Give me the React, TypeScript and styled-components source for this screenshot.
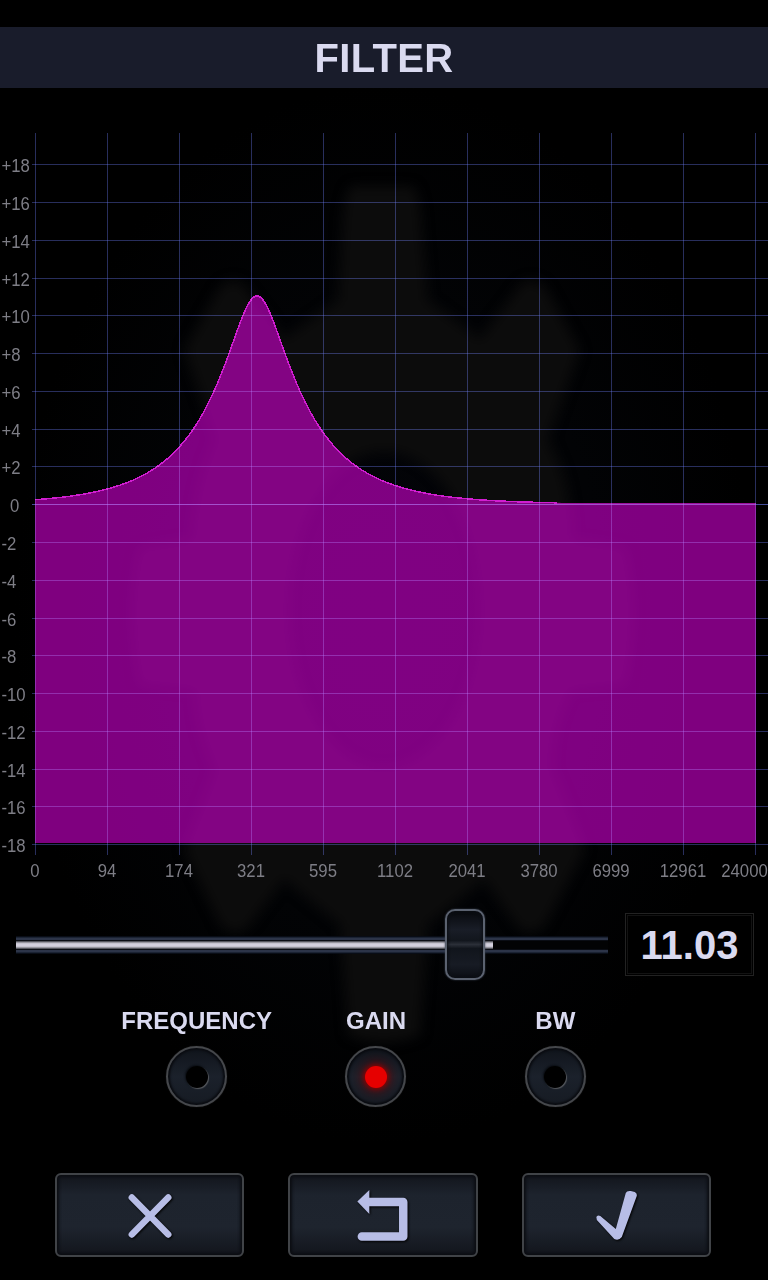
import React from "react";
import styled, { createGlobalStyle } from "styled-components";

const GlobalStyle = createGlobalStyle`
  html, body { margin: 0; background: #000; }
  * { box-sizing: border-box; }
`;

const FONT = `"Liberation Sans", Arial, sans-serif`;

const Screen = styled.main`
  position: relative;
  isolation: isolate;
  width: 768px;
  height: 1280px;
  padding-top: 27px;
  overflow: hidden;
  display: flex;
  flex-direction: column;
  background: #000;
  font-family: ${FONT};
  color: #dadaf0;
`;

const Backdrop = styled.svg`
  position: absolute;
  inset: 0;
`;

const Header = styled.header`
  position: relative;
  height: 61px;
  display: flex;
  align-items: center;
  justify-content: center;
  background: #191c2b;
`;

const Title = styled.h1`
  margin: 0;
  font-size: 40px;
  line-height: 46px;
  font-weight: 700;
  letter-spacing: 0.3px;
`;

const Chart = styled.svg`
  position: relative;
  display: block;
  margin-top: 40px;
  flex: none;
  font-family: ${FONT};
`;

const Grid = styled.g`
  mix-blend-mode: screen;
`;

const SliderRow = styled.section`
  position: relative;
  height: 76px;
  margin-top: 18px;
  padding: 0 14px 0 16px;
  display: flex;
  align-items: center;
  justify-content: space-between;
`;

const Slider = styled.div`
  position: relative;
  width: 592px;
  height: 18px;
  margin-top: 2px;
  background: linear-gradient(
    #090d16 0 1px, #1b2333 1px 2px, #2c3448 2px 4px, #0a0d14 4px 5px, #020304 5px 13px,
    #0a0d14 13px 14px, #2c3448 14px 16px, #1b2333 16px 17px, #090d16 17px 18px
  );
`;

const Fill = styled.div`
  width: 477px;
  height: 18px;
  background: linear-gradient(
    transparent 0 5px, #55565e 5px 6px, #97969f 6px 7px, #c6c4d0 7px 8px, #d3d0de 8px 10px,
    #c6c4d0 10px 11px, #97969f 11px 12px, #55565e 12px 13px, transparent 13px
  );
`;

const Thumb = styled.div`
  position: absolute;
  left: 429px;
  top: -27px;
  width: 40px;
  height: 71px;
  border: 2px solid #5b6270;
  border-radius: 10px;
  background: linear-gradient(#07090d, #191d27 28%, #12161d 44%, #2b2f38 50%, #11151c 56%, #171b24 80%, #0b0e14);
  box-shadow: inset 0 0 3px 1px #0b0e14, 0 0 2px #3a4050;
`;

const Readout = styled.output`
  width: 129px;
  height: 63px;
  display: flex;
  align-items: center;
  justify-content: center;
  padding-top: 3px;
  border: 1px solid #222222;
  outline: 1px solid #121212;
  outline-offset: -3px;
  background: #000;
  font-size: 40px;
  font-weight: 700;
`;

const Modes = styled.section`
  position: relative;
  display: flex;
  justify-content: center;
  margin: 25px 24px 0 0;
  padding-left: 8px;
`;

const Mode = styled.div`
  width: 179.3px;
  display: flex;
  flex-direction: column;
  align-items: center;
  font-size: 24px;
  line-height: 28px;
  font-weight: 700;
`;

const Knob = styled.div`
  width: 61px;
  height: 61px;
  margin-top: 11px;
  border-radius: 50%;
  border: 2px solid #45474b;
  background: linear-gradient(#10141b, #1b212b 50%, #161b23);
  box-shadow: inset 0 0 2px 2px #0a0c11, 0 0 1px #333;
  display: flex;
  align-items: center;
  justify-content: center;
`;

const Led = styled.span<{ $on?: boolean }>`
  width: 22px;
  height: 22px;
  border-radius: 50%;
  background: ${(p) => (p.$on ? "#e60000" : "#000")};
  box-shadow: ${(p) =>
    p.$on
      ? "0 0 5px 1px #900000, 0 0 12px 4px rgba(140, 0, 0, 0.5)"
      : "1px 1px 1px #55585d, -1px -1px 2px #0a0d12"};
`;

const Actions = styled.nav`
  position: relative;
  display: flex;
  gap: 44px;
  margin: 66px 0 0 54.5px;
`;

const ActionButton = styled.button`
  width: 189.6px;
  height: 84px;
  padding: 0;
  border: 2px solid #404347;
  border-radius: 6px;
  background: linear-gradient(#12151c, #1d232d 25%, #1e242e 65%, #12151c);
  box-shadow: inset 0 0 3px 2px #0b0d12;
  display: block;
`;

const Glyph = styled.svg`
  display: block;
  width: 100%;
  height: 100%;
  filter: drop-shadow(1px 1px 1px #000);
`;

const ROWS = [164, 202, 240, 278, 315, 353, 391, 429, 466, 504, 542, 580, 618, 655, 693, 731, 769, 806, 844];
const FREQUENCIES = ["0", "94", "174", "321", "595", "1102", "2041", "3780", "6999", "12961", "24000"];

const PEAK_X = 257;
const GAIN = 11.03;

// Response of a peaking filter in dB at a horizontal chart position.
const response = (x: number) => {
  const d = 2 * Math.sinh((x - PEAK_X) / 116.8);
  const k = 0.1926;
  return 10 * Math.log10((d * d + Math.pow(10, GAIN / 10) * k) / (d * d + k));
};

const levelAt = (x: number) => 503.9 - 18.85 * response(x);

const trace = (end: number) => {
  const points: string[] = [];
  for (let x = 35; x <= end; x += 1) points.push(`${x},${levelAt(x).toFixed(2)}`);
  return `M${points.join("L")}`;
};

const dbLabel = (i: number) => {
  const v = 18 - i * 2;
  return v > 0 ? `+${v}` : `${v}`;
};

const Label = styled.text`
  font-size: 19px;
  fill: #7e7e86;
`;

function FilterChart() {
  return (
    <Chart width="768" height="760" viewBox="0 128 768 760">
      <path d={`${trace(756)}V843H35Z`} fill="#d400d4" fillOpacity={0.6} />
      <path d={trace(557)} fill="none" stroke="#d01ed0" strokeWidth={1.5} shapeRendering="crispEdges" />
      <path d="M557 503.500H756" stroke="#9a109a" />
      <Grid fill="#7080ff">
        {ROWS.map((y) => (
          <rect key={y} x={32} y={y} width={736} height={1} fillOpacity={y === 504 ? 0.6 : 0.36} />
        ))}
        {FREQUENCIES.map((f, i) => (
          <rect key={f} x={35 + i * 72} y={133} width={1} height={722} fillOpacity={0.36} />
        ))}
      </Grid>
      {ROWS.map((y, i) => (
        <Label key={y} transform={`translate(${i === 9 ? 10 : 1.5} ${y + 7.5}) scale(0.88 1)`}>
          {dbLabel(i)}
        </Label>
      ))}
      {FREQUENCIES.map((f, i) => (
        <Label key={f} textAnchor="middle" transform={`translate(${i === 10 ? 744.5 : i * 72 + 35} 876.5) scale(0.88 1)`}>
          {f}
        </Label>
      ))}
    </Chart>
  );
}

function Background() {
  return (
    <Backdrop width="768" height="1280" viewBox="0 0 768 1280">
      <defs>
        <radialGradient id="haze">
          <stop offset="0" stopColor="#030409" />
          <stop offset="0.6" stopColor="#020305" />
          <stop offset="1" stopColor="#000" />
        </radialGradient>
        <filter id="soft" colorInterpolationFilters="sRGB">
          <feGaussianBlur stdDeviation="6" />
        </filter>
      </defs>
      <ellipse cx="384" cy="615" rx="370" ry="530" fill="url(#haze)" />
      <path
        filter="url(#soft)"
        fill="#0c0c0c"
        fillRule="evenodd"
        d="M352 186H412Q420 190 422 230L428 300L480 338L520 285Q532 274 546 288L580 350L548 440Q572 480 572 540L625 548Q640 610 625 684L570 690Q550 730 552 770L585 850L545 925Q530 940 516 925L484 880L428 925L420 1035Q384 1050 348 1035L340 925L284 880L250 925Q236 940 220 925L184 850L216 770Q196 730 196 690L140 684Q125 610 140 548L192 540Q196 480 216 440L184 350L218 290Q230 274 244 285L284 338L338 300L342 230Q344 190 352 186ZM384 452A96 158 0 1 0 384.1 452Z"
      />
    </Backdrop>
  );
}

export default function App() {
  return (
    <Screen>
      <GlobalStyle />
      <Background />
      <Header>
        <Title>FILTER</Title>
      </Header>
      <FilterChart />
      <SliderRow>
        <Slider>
          <Fill />
          <Thumb />
        </Slider>
        <Readout>11.03</Readout>
      </SliderRow>
      <Modes>
        <Mode>
          FREQUENCY
          <Knob><Led /></Knob>
        </Mode>
        <Mode>
          GAIN
          <Knob><Led $on /></Knob>
        </Mode>
        <Mode>
          BW
          <Knob><Led /></Knob>
        </Mode>
      </Modes>
      <Actions>
        <ActionButton aria-label="Cancel">
          <Glyph viewBox="56 1175 186 80" preserveAspectRatio="none">
            <path d="M131 1197.500L167.500 1234.500M167.500 1197.500L131 1234.500" stroke="#b7bde6" strokeWidth="6.500" strokeLinecap="round" />
          </Glyph>
        </ActionButton>
        <ActionButton aria-label="Reset">
          <Glyph viewBox="290 1175 186 80" preserveAspectRatio="none">
            <path d="M366 1202H403.500V1236.500H362" fill="none" stroke="#b7bde6" strokeWidth="8.500" strokeLinecap="round" strokeLinejoin="round" />
            <path d="M357.500 1201.500L369.500 1190V1214Z" fill="#b7bde6" />
          </Glyph>
        </ActionButton>
        <ActionButton aria-label="Apply">
          <Glyph viewBox="524 1175 186 80" preserveAspectRatio="none">
            <path d="M596.500 1217Q597.500 1214.500 600.500 1216L616 1229L626 1193Q627 1190.500 631 1191L635 1192Q637.500 1193 637 1196L622 1237Q619 1241 614.500 1239L597 1220Z" fill="#b7bde6" />
          </Glyph>
        </ActionButton>
      </Actions>
    </Screen>
  );
}
